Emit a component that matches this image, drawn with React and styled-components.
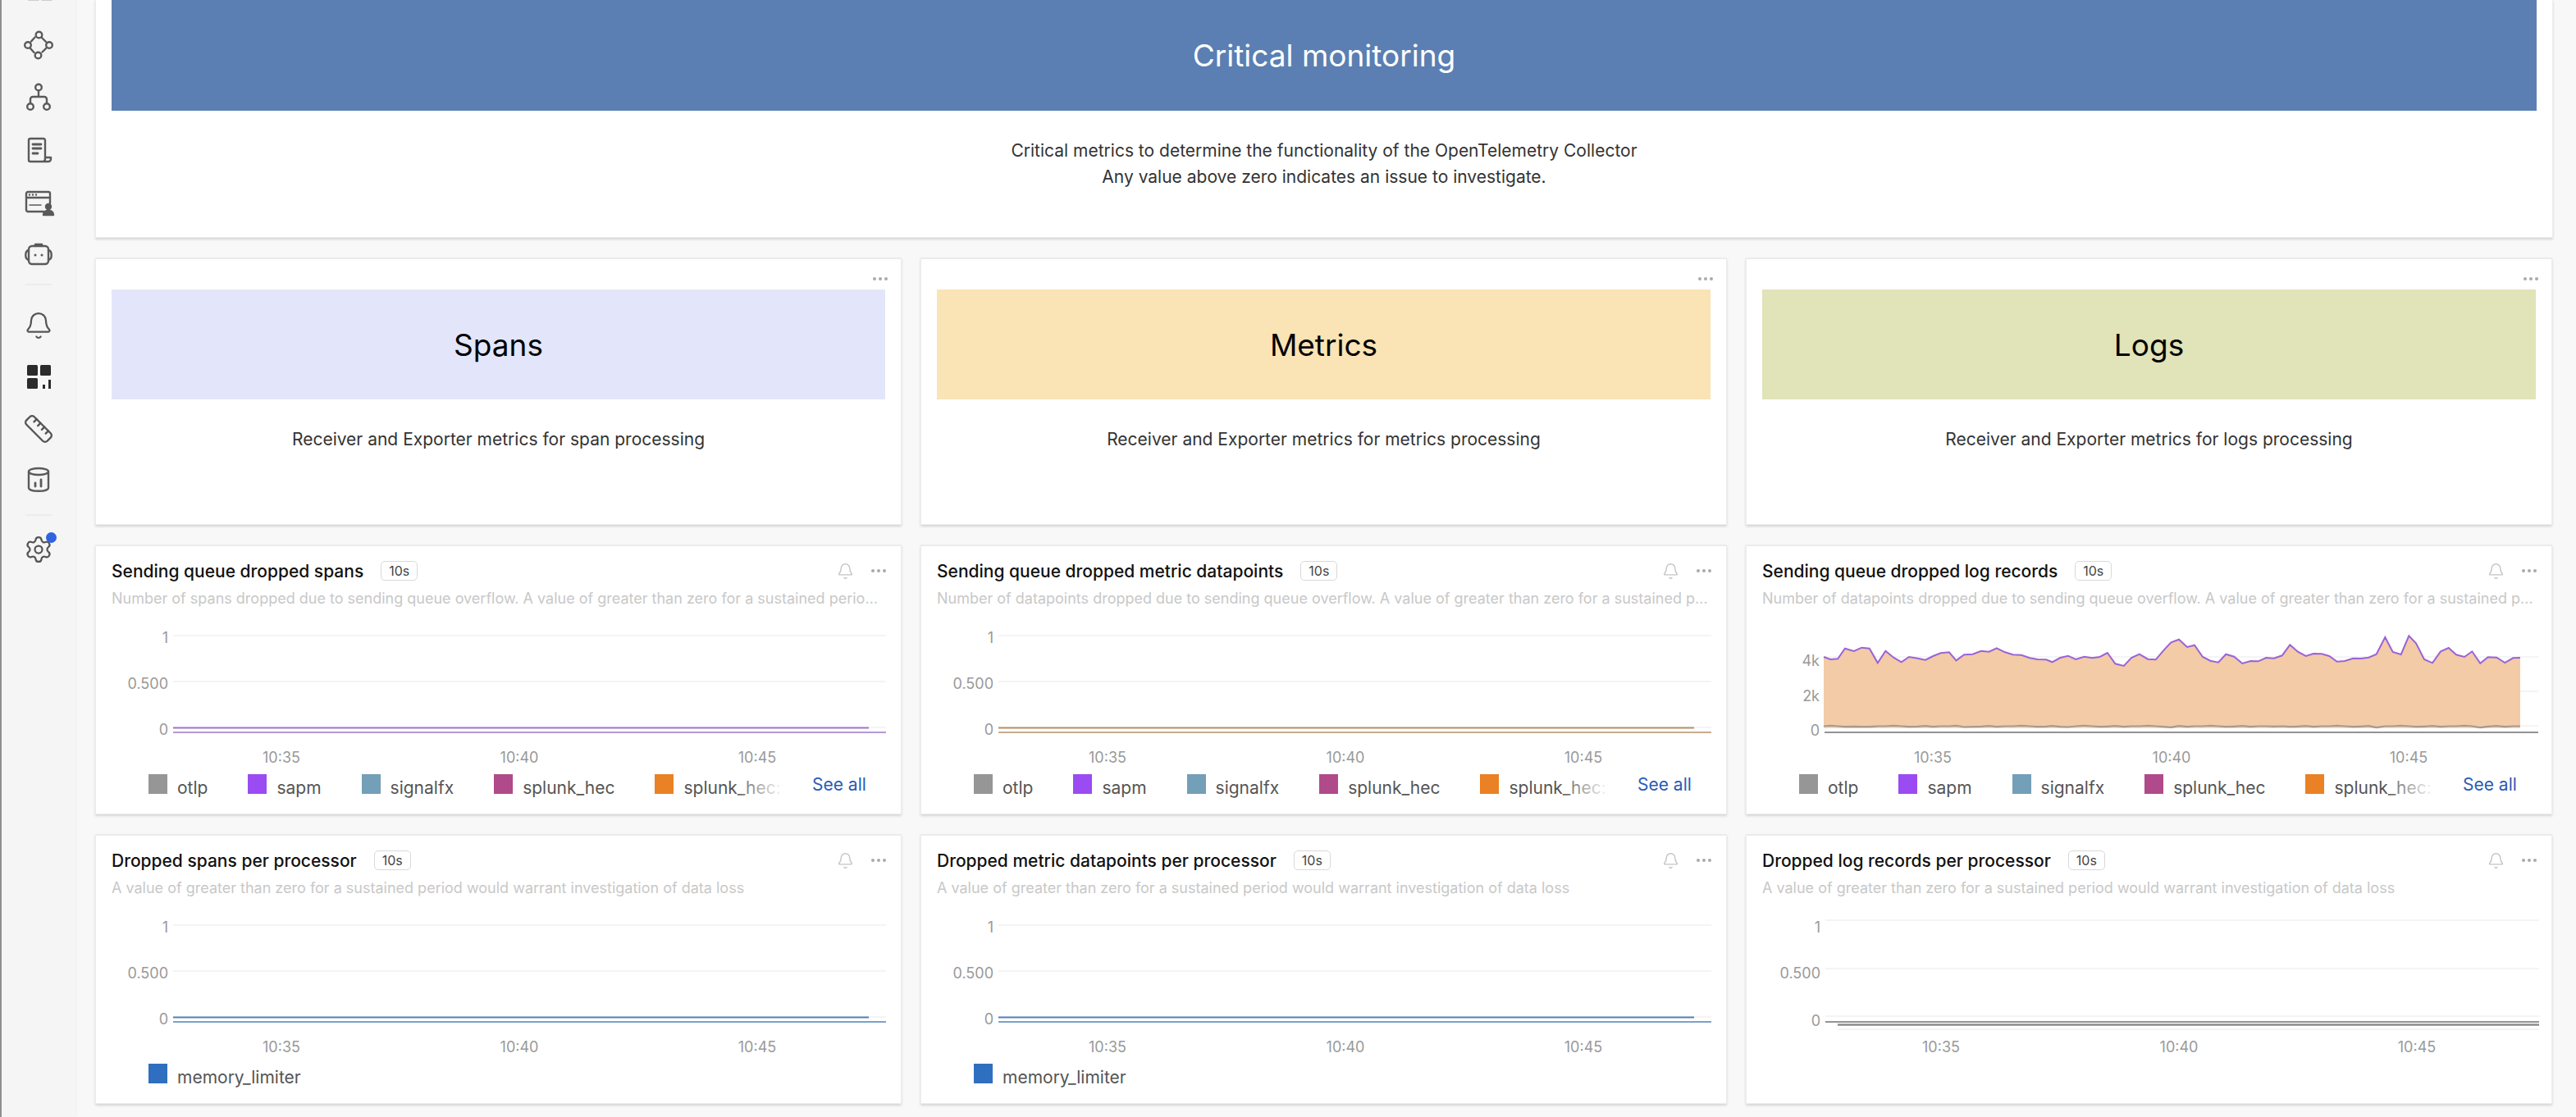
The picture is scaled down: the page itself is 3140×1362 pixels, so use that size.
import React from "react";
import styled, { createGlobalStyle } from "styled-components";
import { Bell, Ruler, Settings } from "lucide-react";

const Global = createGlobalStyle`
  html, body { margin: 0; padding: 0; height: 100%; overflow: hidden; background: #f8f8f8; }
  body { font-family: Inter, "Liberation Sans", sans-serif; }
  * { box-sizing: border-box; }
`;

const Page = styled.div`
  display: flex;
  width: 3140px;
  height: 1362px;
  overflow: hidden;
  background: #f8f8f8;
`;
const Sidebar = styled.nav`
  flex: 0 0 92px;
  height: 1362px;
  background: #f5f5f5;
  border-left: 2px solid #8f8f8f;
  box-shadow: 1px 0 3px rgba(0, 0, 0, 0.04);
  display: flex;
  flex-direction: column;
  align-items: center;
  color: #555;
  padding-right: 0;
`;
const TopClip = styled.div`
  height: 5px;
  overflow: hidden;
  display: flex;
  align-items: flex-end;
  margin-bottom: 18px;
`;
const Slot = styled.div`
  height: ${(p) => p.$h || 64}px;
  width: 100%;
  display: flex;
  align-items: center;
  justify-content: center;
  position: relative;
`;
const Divider = styled.div`
  width: 32px;
  height: 2px;
  background: #ececec;
  margin: ${(p) => p.$m};
`;
const Dot = styled.span`
  position: absolute;
  left: 54px;
  top: 10px;
  width: 13px;
  height: 13px;
  border-radius: 50%;
  background: #2f63e0;
`;
const Main = styled.main`
  flex: 1;
  padding: 0 28px 0 24px;
  display: flex;
  flex-direction: column;
  gap: 24px;
`;
const Card = styled.section`
  background: #fff;
  border: 1px solid #ededed;
  border-top: 2px solid #ebebeb;
  box-shadow: 0 2px 3px rgba(0, 0, 0, 0.14);
  position: relative;
`;
const HeroCard = styled(Card)`
  height: 290px;
  padding: 0 19px;
  border-top: none;
  text-align: center;
`;
const HeroBanner = styled.div`
  height: 135px;
  background: #5b7fb2;
  color: #fff;
  font-size: 37px;
  display: flex;
  align-items: center;
  justify-content: center;
`;
const HeroText = styled.p`
  margin: 33px 0 0;
  font-size: 21px;
  line-height: 32px;
  color: #333;
`;
const Row = styled.div`
  display: grid;
  grid-template-columns: repeat(3, 983px);
  gap: 23px;
`;
const SectionCard = styled(Card)`
  height: 326px;
  padding: 37px 19px 0;
  text-align: center;
`;
const SectionDots = styled.div`
  position: absolute;
  right: 16px;
  top: 22px;
  color: #aaa;
  font-size: 0;
  display: flex;
  gap: 3px;
`;
const Pip = styled.i`
  width: 4px;
  height: 4px;
  border-radius: 50%;
  background: #aaa;
  display: block;
`;
const SectionBanner = styled.div`
  height: 134px;
  background: ${(p) => p.$bg};
  color: #000;
  font-size: 37px;
  display: flex;
  align-items: center;
  justify-content: center;
`;
const SectionText = styled.p`
  margin: 36px 0 0;
  font-size: 21px;
  line-height: 26px;
  color: #333;
`;
const ChartCard = styled(Card)`
  height: 329px;
  padding: 18px 19px 0;
`;
const Header = styled.header`
  display: flex;
  align-items: center;
  height: 24px;
`;
const Title = styled.h3`
  margin: 0;
  font-size: 21px;
  font-weight: 500;
  color: #111;
`;
const Badge = styled.span`
  margin-left: 21px;
  width: 45px;
  height: 24px;
  border: 1px solid #d9d9d9;
  border-radius: 5px;
  font-size: 16px;
  color: #444;
  display: flex;
  align-items: center;
  justify-content: center;
`;
const Actions = styled.div`
  margin-left: auto;
  display: flex;
  align-items: center;
  gap: 21px;
  color: #c4c4c4;
  margin-right: -1px;
`;
const Description = styled.p`
  margin: 10px 0 0;
  font-size: 18px;
  line-height: 24px;
  color: #c8c8c8;
  white-space: nowrap;
  overflow: hidden;
  text-overflow: ellipsis;
  width: 940px;
`;
const ChartSvg = styled.svg`
  display: block;
  position: absolute;
  left: 0;
  top: 82px;
  width: 981px;
  height: 200px;
  overflow: visible;
`;
const LegendWrap = styled.div`
  position: absolute;
  left: 64px;
  top: 278px;
  right: 0;
  height: 34px;
  display: flex;
`;
const LegendScroll = styled.div`
  width: 785px;
  overflow: hidden;
  position: relative;
  display: flex;
  gap: 49px;
  white-space: nowrap;
`;
const LegendFade = styled.div`
  position: absolute;
  right: 0;
  top: 0;
  bottom: 0;
  width: 72px;
  background: linear-gradient(90deg, rgba(255, 255, 255, 0), #fff 85%);
`;
const LegendItem = styled.div`
  display: flex;
  align-items: flex-start;
  gap: 12px;
  flex: none;
`;
const Swatch = styled.span`
  width: 23px;
  height: 24px;
  background: ${(p) => p.$c};
  flex: none;
`;
const LegendLabel = styled.span`
  font-size: 21px;
  line-height: 26px;
  margin-top: 4px;
  color: #555;
`;
const SeeAll = styled.a`
  margin-left: 24px;
  font-size: 21px;
  line-height: 26px;
  color: #2a5bb5;
`;
const AxisText = styled.text`
  font-size: 18px;
  fill: #999;
  font-family: Inter, "Liberation Sans", sans-serif;
`;

const ICON = "#5a5a5a";
const icon = { fill: "none", stroke: ICON, strokeWidth: 2.4, strokeLinecap: "round", strokeLinejoin: "round" };

const IconNetwork = () => (
  <svg width="40" height="40" viewBox="0 0 40 40" {...icon}>
    <circle cx="20.5" cy="7.5" r="3.8" /><circle cx="33" cy="20" r="3.8" /><circle cx="19.5" cy="32.5" r="3.8" /><circle cx="7" cy="20" r="3.8" />
    <path d="M11 15.5l4.5-5M24 11l5 5M14.500 29l-4.500-5M24.500 28.500l5-5" />
  </svg>
);
const IconTree = () => (
  <svg width="36" height="36" viewBox="0 0 36 36" {...icon}>
    <circle cx="18" cy="5.500" r="3.800" /><circle cx="8" cy="29" r="3.800" /><circle cx="28" cy="29" r="3.800" />
    <path d="M18 9.500V17M8 25v-5a3 3 0 0 1 3-3h14a3 3 0 0 1 3 3v5" />
  </svg>
);
const IconDoc = () => (
  <svg width="36" height="36" viewBox="0 0 36 36" {...icon}>
    <path d="M26 27V6a2 2 0 0 0-2-2H8a2 2 0 0 0-2 2v24a2 2 0 0 0 2 2h22a3 3 0 0 0 3-3v-2h-7v2a3 3 0 0 1-3 3" />
    <path d="M11 11h10M11 16h10M11 22h6" strokeWidth="2.800" />
  </svg>
);
const IconConsole = () => (
  <svg width="40" height="36" viewBox="0 0 40 36" {...icon}>
    <path d="M26 29H7a2 2 0 0 1-2-2V7a2 2 0 0 1 2-2h25a2 2 0 0 1 2 2v12M5 12h29" />
    <path d="M9 8.500h.01M13 8.500h.01M17 8.500h.01" />
    <circle cx="32" cy="23" r="3" fill={ICON} />
    <path d="M26 33c0-7 12-7 12 0z" fill={ICON} />
    <path d="M9 21h14" strokeWidth="1.500" />
  </svg>
);
const IconBot = () => (
  <svg width="38" height="36" viewBox="0 0 38 36" {...icon}>
    <rect x="7" y="7" width="24" height="22" rx="4" />
    <path d="M7 12c-5 1-5 11 0 12M31 12c5 1 5 11 0 12M15 7V5h8v2" />
    <path d="M15 18h.01M23 18h.01" strokeWidth="3" />
  </svg>
);
const IconTopClip = () => (
  <svg width="36" height="14" viewBox="0 0 36 14" {...icon}>
    <path d="M6 0v8h12V0M22 0v8h12V0" />
  </svg>
);
const IconDash = () => (
  <svg width="36" height="36" viewBox="0 0 36 36" fill="#2b2b2b">
    <rect x="4" y="3" width="13" height="13" rx="1.500" />
    <rect x="20" y="3" width="13" height="13" rx="1.500" />
    <rect x="4" y="19" width="13" height="13" rx="1.500" />
    <rect x="23" y="27" width="3" height="5" />
    <rect x="30" y="21" width="3" height="11" />
  </svg>
);
const IconDb = () => (
  <svg width="36" height="36" viewBox="0 0 36 36" {...icon}>
    <ellipse cx="18" cy="7" rx="12" ry="4" />
    <path d="M6 7v20c0 5 24 5 24 0V7" />
    <path d="M14 21v4M21 17v8" strokeWidth="2.800" />
  </svg>
);

const raw7 = [[183,153],[207,162],[233,160],[258,122],[290,132],[317,119],[345,122],[374,175],[402,131],[430,155],[458,172],[485,153],[515,158],[543,164],[570,150],[597,139],[627,136],[652,166],[680,145],[710,143],[740,131],[768,134],[795,121],[825,136],[853,145],[883,146],[912,157],[940,162],[970,163],[992,172],[1020,156],[1048,149],[1075,162],[1105,152],[1133,157],[1160,153],[1187,138],[1215,178],[1245,186],[1272,156],[1300,143],[1330,161],[1358,163],[1385,130],[1412,100]];
const raw8 = [[48,89],[78,117],[105,110],[135,153],[163,167],[192,173],[220,143],[250,152],[280,177],[310,168],[338,169],[367,156],[395,158],[425,148],[454,109],[483,134],[512,150],[540,141],[570,142],[598,150],[626,170],[654,168],[685,158],[712,159],[742,155],[770,143],[802,81],[830,135],[860,144],[889,76],[915,103],[945,162],[975,175],[1005,133],[1034,120],[1062,145],[1092,153],[1120,133],[1150,176],[1178,154],[1210,155],[1240,174],[1270,157],[1296,156]];
const CARD3_X = 2129;
const ROW3_Y = 748;
const topLine = [
  ...raw7.map(([x, y]) => [2160 + x * 0.3444 - CARD3_X, 750 + y / 3 - ROW3_Y]),
  ...raw8.map(([x, y]) => [2640 + x / 3 - CARD3_X, 750 + y / 3 - ROW3_Y]),
];
const lowLine = topLine.map(([x], i) => [x, 137.500 + [0, -1, 0, 1, 0.500, -0.500, 1, 0][i % 8] * 0.700 + (i % 13 === 5 ? 1 : 0)]);
const pts = (a) => a.map(([x, y]) => `${x.toFixed(1)},${y.toFixed(1)}`).join(" ");

const SCALE01 = [
  { t: "1", y: 27 },
  { t: "0.500", y: 83 },
  { t: "0", y: 139 },
];

const Plot = ({ scale, x0, x1, ticks, flat, flatEnd, area, zeroY = 145, lowX, grid }) => (
  <ChartSvg viewBox="0 0 981 200">
    {scale.map((s) => (
      <React.Fragment key={s.t}>
        <line x1={x0} x2={x1} y1={s.gy ?? s.y} y2={s.gy ?? s.y} stroke="#f1f1f1" strokeWidth="1.500" />
        <AxisText x={x0 - 6} y={(s.ly ?? s.y) + 9} textAnchor="end">{s.t}</AxisText>
      </React.Fragment>
    ))}
    {grid && <line x1={lowX} x2={x1} y1={grid} y2={grid} stroke="#f1f1f1" strokeWidth="1.500" />}
    {area && (
      <>
        <polygon points={`${pts(topLine)} ${pts([...lowLine].reverse())}`} fill="#f3cba6" />
        <rect x={topLine[0][0]} y="138" width={topLine[topLine.length - 1][0] - topLine[0][0]} height="2" fill="#f6dcc6" />
        <polyline points={pts(lowLine)} fill="none" stroke="#a9998f" strokeWidth="2.200" />
        <polyline points={pts(topLine)} fill="none" stroke="#9a63d8" strokeWidth="2" />
      </>
    )}
    {flat && <line x1={x0} x2={flatEnd} y1="139.500" y2="139.500" stroke={flat} strokeWidth="2" />}
    <line x1={x0} x2={x1} y1={zeroY} y2={zeroY} stroke={flat && !lowX ? flat : "#6f6f6f"} strokeWidth="1.500" />
    {lowX && <line x1={lowX} x2={x1} y1="148.500" y2="148.500" stroke="#8b8b8b" strokeWidth="2.500" />}
    {ticks.map((t, i) => (
      <AxisText key={t} x={ticks.x[i]} y="182" textAnchor="middle">{t}</AxisText>
    ))}
  </ChartSvg>
);

const mkTicks = (x) => Object.assign(["10:35", "10:40", "10:45"], { x });

const SERIES = [
  ["otlp", "#969696"],
  ["sapm", "#9b4bf2"],
  ["signalfx", "#739fb8"],
  ["splunk_hec", "#b04a8a"],
  ["splunk_hec:2", "#ea8124"],
];

const Legend = ({ single }) => (
  <LegendWrap>
    {single ? (
      <LegendItem>
        <Swatch $c="#2f6fc0" />
        <LegendLabel>memory_limiter</LegendLabel>
      </LegendItem>
    ) : (
      <>
        <LegendScroll>
          {SERIES.map(([n, c]) => (
            <LegendItem key={n}>
              <Swatch $c={c} />
              <LegendLabel>{n}</LegendLabel>
            </LegendItem>
          ))}
          <LegendFade />
        </LegendScroll>
        <SeeAll>See all</SeeAll>
      </>
    )}
  </LegendWrap>
);

const Chart = ({ title, desc, children }) => (
  <ChartCard>
    <Header>
      <Title>{title}</Title>
      <Badge>10s</Badge>
      <Actions>
        <Bell size={21} strokeWidth={1.6} />
        <SectionDotsInline />
      </Actions>
    </Header>
    <Description>{desc}</Description>
    {children}
  </ChartCard>
);
const DotsRow = styled.div`
  display: flex;
  gap: 3px;
`;
const SectionDotsInline = () => (
  <DotsRow><Pip /><Pip /><Pip /></DotsRow>
);

const SECTIONS = [
  ["Spans", "#e3e6fa", "Receiver and Exporter metrics for span processing"],
  ["Metrics", "#fae3b4", "Receiver and Exporter metrics for metrics processing"],
  ["Logs", "#e1e3b9", "Receiver and Exporter metrics for logs processing"],
];

const LOGS_SCALE = [
  { t: "4k", y: 53, ly: 55 },
  { t: "2k", y: 95, ly: 98 },
  { t: "0", y: 137, ly: 140 },
];
const LOW_SCALE = [
  { t: "1", y: 21, ly: 27 },
  { t: "0.500", y: 80, ly: 83 },
  { t: "0", y: 138, ly: 141 },
];
const DROP = "A value of greater than zero for a sustained period would warrant investigation of data loss";

export default function App() {
  return (
    <Page>
      <Global />
      <Sidebar>
        <TopClip><IconTopClip /></TopClip>
        <Slot $h={64}><IconNetwork /></Slot>
        <Slot $h={64}><IconTree /></Slot>
        <Slot $h={64}><IconDoc /></Slot>
        <Slot $h={64}><IconConsole /></Slot>
        <Slot $h={64}><IconBot /></Slot>
        <Divider $m="3px 0 17px" />
        <Slot $h={63}><Bell size={36} strokeWidth={1.5} /></Slot>
        <Slot $h={63}><IconDash /></Slot>
        <Slot $h={63}><Ruler size={38} strokeWidth={1.5} /></Slot>
        <Slot $h={63}><IconDb /></Slot>
        <Divider $m="10px 0 10px" />
        <Slot $h={62}><Settings size={36} strokeWidth={1.5} /><Dot /></Slot>
      </Sidebar>
      <Main>
        <HeroCard>
          <HeroBanner>Critical monitoring</HeroBanner>
          <HeroText>
            Critical metrics to determine the functionality of the OpenTelemetry Collector
            <br />
            Any value above zero indicates an issue to investigate.
          </HeroText>
        </HeroCard>
        <Row>
          {SECTIONS.map(([t, bg, txt]) => (
            <SectionCard key={t}>
              <SectionDots><Pip /><Pip /><Pip /></SectionDots>
              <SectionBanner $bg={bg}>{t}</SectionBanner>
              <SectionText>{txt}</SectionText>
            </SectionCard>
          ))}
        </Row>
        <Row>
          <Chart title="Sending queue dropped spans" desc="Number of spans dropped due to sending queue overflow. A value of greater than zero for a sustained period would warrant investigation">
            <Plot scale={SCALE01} x0={94} x1={963} flat="#9a78c8" flatEnd={942} ticks={mkTicks([226, 516, 806])} />
            <Legend />
          </Chart>
          <Chart title="Sending queue dropped metric datapoints" desc="Number of datapoints dropped due to sending queue overflow. A value of greater than zero for a sustained period would warrant">
            <Plot scale={SCALE01} x0={94} x1={963} flat="#b8906a" flatEnd={942} ticks={mkTicks([227, 517, 807])} />
            <Legend />
          </Chart>
          <Chart title="Sending queue dropped log records" desc="Number of datapoints dropped due to sending queue overflow. A value of greater than zero for a sustained period would warrant">
            <Plot scale={LOGS_SCALE} x0={95} x1={965} area ticks={mkTicks([227, 518, 807])} />
            <Legend />
          </Chart>
        </Row>
        <Row>
          <Chart title="Dropped spans per processor" desc={DROP}>
            <Plot scale={SCALE01} x0={94} x1={963} flat="#4f82b8" flatEnd={942} ticks={mkTicks([226, 516, 806])} />
            <Legend single />
          </Chart>
          <Chart title="Dropped metric datapoints per processor" desc={DROP}>
            <Plot scale={SCALE01} x0={94} x1={963} flat="#4f82b8" flatEnd={942} ticks={mkTicks([227, 517, 807])} />
            <Legend single />
          </Chart>
          <Chart title="Dropped log records per processor" desc={DROP}>
            <Plot scale={LOW_SCALE} x0={96} x1={966} lowX={111} grid={154} ticks={mkTicks([237, 527, 817])} />
          </Chart>
        </Row>
      </Main>
    </Page>
  );
}
